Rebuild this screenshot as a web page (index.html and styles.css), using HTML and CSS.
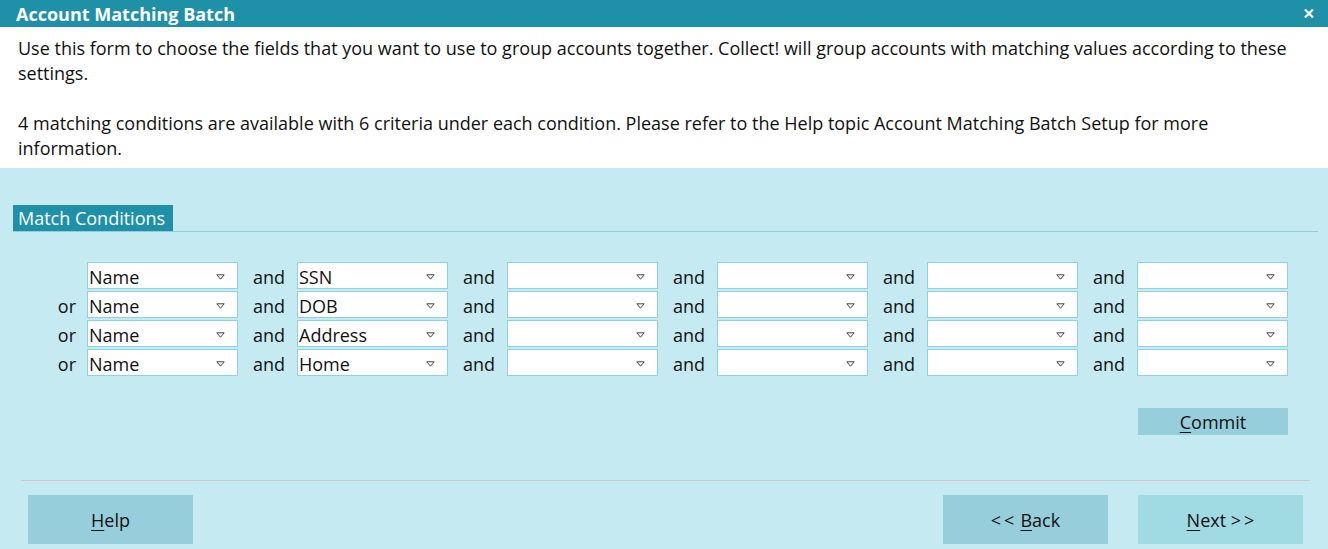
FILE: index.html
```html
<!DOCTYPE html>
<html lang="en">
<head>
<meta charset="utf-8">
<title>Account Matching Batch</title>
<link rel="stylesheet" href="styles.css">
</head>
<body>
<div class="window">
  <header class="titlebar">
    <span class="title">Account Matching Batch</span>
    <span class="close" aria-label="Close">
      <svg width="10" height="9" viewBox="0 0 10 9"><path d="M1 0.5 L9 8.5 M9 0.5 L1 8.5" stroke="#fff" stroke-width="2.2" fill="none"/></svg>
    </span>
  </header>
  <section class="intro">
    <p>Use this form to choose the fields that you want to use to group accounts together. Collect! will group accounts with matching values according to these settings.</p>
    <p class="gap">4 matching conditions are available with 6 criteria under each condition. Please refer to the Help topic Account Matching Batch Setup for more information.</p>
  </section>
  <main class="body">
    <div class="tabline"><span class="tab">Match Conditions</span></div>
    <div class="grid">
      <span class="lbl first"></span>
      <div class="sel"><span>Name</span><svg class="arr" width="9" height="6" viewBox="0 0 9 6"><path d="M0.8 0.8 H8.2 L4.5 5.2 Z" fill="none" stroke="#444" stroke-width="1"/></svg></div>
      <span class="lbl">and</span><div class="sel"><span>SSN</span><svg class="arr" width="9" height="6" viewBox="0 0 9 6"><path d="M0.8 0.8 H8.2 L4.5 5.2 Z" fill="none" stroke="#444" stroke-width="1"/></svg></div>
      <span class="lbl">and</span><div class="sel"><span></span><svg class="arr" width="9" height="6" viewBox="0 0 9 6"><path d="M0.8 0.8 H8.2 L4.5 5.2 Z" fill="none" stroke="#444" stroke-width="1"/></svg></div>
      <span class="lbl">and</span><div class="sel"><span></span><svg class="arr" width="9" height="6" viewBox="0 0 9 6"><path d="M0.8 0.8 H8.2 L4.5 5.2 Z" fill="none" stroke="#444" stroke-width="1"/></svg></div>
      <span class="lbl">and</span><div class="sel"><span></span><svg class="arr" width="9" height="6" viewBox="0 0 9 6"><path d="M0.8 0.8 H8.2 L4.5 5.2 Z" fill="none" stroke="#444" stroke-width="1"/></svg></div>
      <span class="lbl">and</span><div class="sel"><span></span><svg class="arr" width="9" height="6" viewBox="0 0 9 6"><path d="M0.8 0.8 H8.2 L4.5 5.2 Z" fill="none" stroke="#444" stroke-width="1"/></svg></div>

      <span class="lbl first">or</span>
      <div class="sel"><span>Name</span><svg class="arr" width="9" height="6" viewBox="0 0 9 6"><path d="M0.8 0.8 H8.2 L4.5 5.2 Z" fill="none" stroke="#444" stroke-width="1"/></svg></div>
      <span class="lbl">and</span><div class="sel"><span>DOB</span><svg class="arr" width="9" height="6" viewBox="0 0 9 6"><path d="M0.8 0.8 H8.2 L4.5 5.2 Z" fill="none" stroke="#444" stroke-width="1"/></svg></div>
      <span class="lbl">and</span><div class="sel"><span></span><svg class="arr" width="9" height="6" viewBox="0 0 9 6"><path d="M0.8 0.8 H8.2 L4.5 5.2 Z" fill="none" stroke="#444" stroke-width="1"/></svg></div>
      <span class="lbl">and</span><div class="sel"><span></span><svg class="arr" width="9" height="6" viewBox="0 0 9 6"><path d="M0.8 0.8 H8.2 L4.5 5.2 Z" fill="none" stroke="#444" stroke-width="1"/></svg></div>
      <span class="lbl">and</span><div class="sel"><span></span><svg class="arr" width="9" height="6" viewBox="0 0 9 6"><path d="M0.8 0.8 H8.2 L4.5 5.2 Z" fill="none" stroke="#444" stroke-width="1"/></svg></div>
      <span class="lbl">and</span><div class="sel"><span></span><svg class="arr" width="9" height="6" viewBox="0 0 9 6"><path d="M0.8 0.8 H8.2 L4.5 5.2 Z" fill="none" stroke="#444" stroke-width="1"/></svg></div>

      <span class="lbl first">or</span>
      <div class="sel"><span>Name</span><svg class="arr" width="9" height="6" viewBox="0 0 9 6"><path d="M0.8 0.8 H8.2 L4.5 5.2 Z" fill="none" stroke="#444" stroke-width="1"/></svg></div>
      <span class="lbl">and</span><div class="sel"><span>Address</span><svg class="arr" width="9" height="6" viewBox="0 0 9 6"><path d="M0.8 0.8 H8.2 L4.5 5.2 Z" fill="none" stroke="#444" stroke-width="1"/></svg></div>
      <span class="lbl">and</span><div class="sel"><span></span><svg class="arr" width="9" height="6" viewBox="0 0 9 6"><path d="M0.8 0.8 H8.2 L4.5 5.2 Z" fill="none" stroke="#444" stroke-width="1"/></svg></div>
      <span class="lbl">and</span><div class="sel"><span></span><svg class="arr" width="9" height="6" viewBox="0 0 9 6"><path d="M0.8 0.8 H8.2 L4.5 5.2 Z" fill="none" stroke="#444" stroke-width="1"/></svg></div>
      <span class="lbl">and</span><div class="sel"><span></span><svg class="arr" width="9" height="6" viewBox="0 0 9 6"><path d="M0.8 0.8 H8.2 L4.5 5.2 Z" fill="none" stroke="#444" stroke-width="1"/></svg></div>
      <span class="lbl">and</span><div class="sel"><span></span><svg class="arr" width="9" height="6" viewBox="0 0 9 6"><path d="M0.8 0.8 H8.2 L4.5 5.2 Z" fill="none" stroke="#444" stroke-width="1"/></svg></div>

      <span class="lbl first">or</span>
      <div class="sel"><span>Name</span><svg class="arr" width="9" height="6" viewBox="0 0 9 6"><path d="M0.8 0.8 H8.2 L4.5 5.2 Z" fill="none" stroke="#444" stroke-width="1"/></svg></div>
      <span class="lbl">and</span><div class="sel"><span>Home</span><svg class="arr" width="9" height="6" viewBox="0 0 9 6"><path d="M0.8 0.8 H8.2 L4.5 5.2 Z" fill="none" stroke="#444" stroke-width="1"/></svg></div>
      <span class="lbl">and</span><div class="sel"><span></span><svg class="arr" width="9" height="6" viewBox="0 0 9 6"><path d="M0.8 0.8 H8.2 L4.5 5.2 Z" fill="none" stroke="#444" stroke-width="1"/></svg></div>
      <span class="lbl">and</span><div class="sel"><span></span><svg class="arr" width="9" height="6" viewBox="0 0 9 6"><path d="M0.8 0.8 H8.2 L4.5 5.2 Z" fill="none" stroke="#444" stroke-width="1"/></svg></div>
      <span class="lbl">and</span><div class="sel"><span></span><svg class="arr" width="9" height="6" viewBox="0 0 9 6"><path d="M0.8 0.8 H8.2 L4.5 5.2 Z" fill="none" stroke="#444" stroke-width="1"/></svg></div>
      <span class="lbl">and</span><div class="sel"><span></span><svg class="arr" width="9" height="6" viewBox="0 0 9 6"><path d="M0.8 0.8 H8.2 L4.5 5.2 Z" fill="none" stroke="#444" stroke-width="1"/></svg></div>
    </div>
    <div class="commit-row"><button class="btn commit"><u>C</u>ommit</button></div>
    <hr class="sep">
    <footer class="footer">
      <button class="btn big"><u>H</u>elp</button>
      <div class="nav">
        <button class="btn big"><span class="lt">&lt;&lt;</span><u>B</u>ack</button>
        <button class="btn big next"><u>N</u>ext <span class="gt">&gt;&gt;</span></button>
      </div>
    </footer>
  </main>
</div>
</body>
</html>
```

FILE: styles.css
```css
* { box-sizing: border-box; }
html, body { margin: 0; padding: 0; }
body {
  width: 1328px;
  height: 549px;
  overflow: hidden;
  background: #c5eaf2;
  font-family: "Open Sans", "Noto Sans", sans-serif;
  font-size: 18px;
  color: #111;
}
.titlebar {
  height: 27px;
  background: #1e91a8;
  display: flex;
  align-items: center;
  justify-content: space-between;
  padding: 1px 14px 0 16px;
}
.title {
  color: #fff;
  font-weight: 700;
  font-size: 18px;
}
.close { display: flex; align-items: center; margin-top: -2px; }
.intro {
  background: #fff;
  height: 141px;
  padding: 9px 18px 0 18px;
  line-height: 25px;
}
.intro p { margin: 0; }
.intro p.gap { margin-top: 25px; }
.body { padding-top: 37px; }
.tabline {
  margin: 0 10px 0 13px;
  border-bottom: 1px solid #8fd0dc;
  height: 27px;
}
.tab {
  display: inline-block;
  height: 26px;
  width: 160px;
  background: #1e91a8;
  color: #fff;
  line-height: 26px;
  padding-left: 5px;
  white-space: nowrap;
}
.grid {
  margin-top: 30px;
  display: grid;
  grid-template-columns: 87px 151px repeat(5, 59px 151px);
  grid-auto-rows: 27px;
  row-gap: 2px;
}
.lbl {
  text-align: right;
  padding-right: 12px;
  padding-top: 1px;
  line-height: 28px;
}
.lbl.first { padding-right: 11px; }
.sel {
  background: #fff;
  border: 1px solid #8dd3df;
  display: flex;
  align-items: center;
  justify-content: space-between;
  padding: 0 12px 0 1px;
}
.sel span { line-height: 27px; padding-top: 3px; }
.arr { display: block; margin-top: 2px; }
.commit-row {
  display: flex;
  justify-content: flex-end;
  padding-right: 40px;
  margin-top: 32px;
}
.btn {
  border: 0;
  background: #96cfdb;
  font: inherit;
  color: #111;
  padding: 0;
  cursor: pointer;
}
.btn u { text-decoration-thickness: 1px; text-underline-offset: 3px; }
.lt { letter-spacing: 3px; margin-right: 3px; }
.gt { letter-spacing: 3px; margin-right: -3px; }
.commit { width: 150px; height: 27px; padding-top: 1px; }
.sep {
  margin: 45px 18px 0 21px;
  border: 0;
  border-top: 1px solid #c9c9c9;
  height: 0;
}
.footer {
  display: flex;
  justify-content: space-between;
  padding: 14px 25px 0 28px;
}
.nav { display: flex; gap: 30px; }
.big { width: 165px; height: 49px; }
.next { background: #a0dbe4; }
```
